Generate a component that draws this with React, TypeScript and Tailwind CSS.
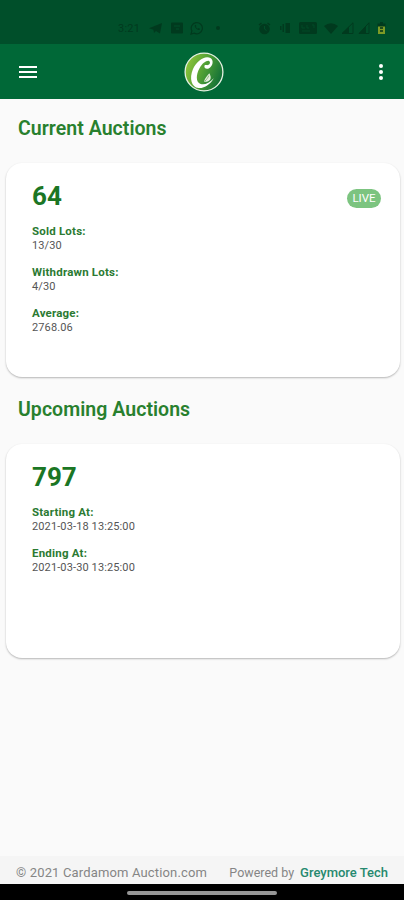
type Field = { label: string; value: string };

type Auction = { id: string; live?: boolean; fields: Field[] };

const current: Auction = {
  id: "64",
  live: true,
  fields: [
    { label: "Sold Lots:", value: "13/30" },
    { label: "Withdrawn Lots:", value: "4/30" },
    { label: "Average:", value: "2768.06" },
  ],
};

const upcoming: Auction = {
  id: "797",
  fields: [
    { label: "Starting At:", value: "2021-03-18 13:25:00" },
    { label: "Ending At:", value: "2021-03-30 13:25:00" },
  ],
};

function StatusBar() {
  return (
    <div className="flex h-11 shrink-0 items-center justify-between bg-[#004f2a] pt-3 pr-[18px] pl-[118px] text-[#003a1e]">
      <div className="flex items-center">
        <span className="w-[31px] text-[11px] leading-none tracking-[0.2px]">3:21</span>
        <svg className="h-[12px] w-[14px]" viewBox="0 0 14 12" fill="currentColor">
          <path d="M0 6.3 13 1l-2 10.5-4-2.6-2 2-.6-3.2z" />
        </svg>
        <svg className="ml-2 h-[12px] w-[12px]" viewBox="0 0 12 12">
          <rect width="12" height="11" y=".5" rx="1" fill="currentColor" />
          <path d="M3 4h6M5 7h3" stroke="#004f2a" />
        </svg>
        <svg className="ml-[7px] h-[14px] w-[14px]" viewBox="0 0 14 14" fill="none" stroke="currentColor" strokeWidth="1.2">
          <path d="m1 13 .9-3.1a5.6 5.6 0 1 1 2.2 2.2z" />
          <path d="M4.8 4.2c-.8 1.8 2.7 5.4 4.8 4.8l.4-1.2-1.6-.7-.8.7-1.8-1.9.6-.7-.7-1.4z" fill="currentColor" stroke="none" />
        </svg>
        <span className="ml-3 size-1 rounded-full bg-current" />
      </div>
      <div className="flex items-center">
        <svg className="h-[13px] w-[13px]" viewBox="0 0 13 13">
          <circle cx="6.5" cy="7" r="5.3" fill="currentColor" />
          <path d="m1 3 2.5-2M12 3 9.500 1" stroke="currentColor" strokeWidth="1.4" />
          <path d="M6.500 4v3l2 1.500" fill="none" stroke="#004f2a" />
        </svg>
        <svg className="ml-[9px] h-[12px] w-[11px]" viewBox="0 0 11 12" fill="currentColor">
          <path d="M0 4h1.500v4H0zM2.500 2H4v8H2.500zM5.500 1H10v10H5.500z" />
        </svg>
        <svg className="ml-2 h-[12px] w-[18px]" viewBox="0 0 18 12">
          <rect width="18" height="12" rx="1.500" fill="currentColor" />
          <path d="M3 3v3h3M8 3v3h2M13 3h2v3M3 9h8" fill="none" stroke="#004f2a" strokeWidth=".8" />
        </svg>
        <svg className="ml-[7px] h-[11px] w-[14px]" viewBox="0 0 14 11" fill="currentColor">
          <path d="M7 11 0 3q7-5.500 14 0z" />
        </svg>
        <svg className="ml-[3px] h-[12px] w-[13px]" viewBox="0 0 13 12">
          <path d="M12 .8v10.700H1z" fill="none" stroke="currentColor" />
          <path d="M8 4.500v7H1z" fill="currentColor" />
        </svg>
        <svg className="ml-[4px] h-[12px] w-[12px]" viewBox="0 0 12 12">
          <path d="M11 .8v10.700H1z" fill="none" stroke="currentColor" />
          <path d="M8 4v7.500H1z" fill="currentColor" />
        </svg>
        <svg className="ml-[7px] h-[13px] w-[9px]" viewBox="0 0 9 13">
          <path d="M3 0h3v1.500h2.500V5h-8V1.500H3z" fill="currentColor" />
          <path d="M1 4.500h7v7.500H1z" fill="#7d9a26" />
          <path d="M3 6h3M3 9h3" stroke="#003319" strokeWidth="1.500" />
        </svg>
      </div>
    </div>
  );
}

function Logo() {
  return (
    <svg className="size-10" viewBox="0 0 40 40">
      <defs>
        <linearGradient id="leaf" x1="0" y1=".3" x2="1" y2=".7">
          <stop offset="0" stopColor="#8fc53a" />
          <stop offset=".5" stopColor="#4c9c35" />
          <stop offset="1" stopColor="#0b6b38" />
        </linearGradient>
      </defs>
      <circle cx="20" cy="20" r="18.900" fill="url(#leaf)" stroke="#e5f1e3" strokeWidth="1.300" />
      <path
        d="M20.500 13.500c-.8 2.700 2 4.200 4.600 2.700 3.800-2.200 4.800-7.700 1.700-9.900C21.500 2.700 12.700 8.500 8.900 17.200 5 26.500 7.500 35.300 14.500 36c5.800.5 12-3.800 15.300-9.800-4.200 4.600-9.400 7-13.200 5.700-5-1.800-4.600-9.400-1.200-15.500 2.900-5.300 7.500-8.300 9.600-7.400 1.800.8.9 3.800-1.300 4.100-1.300.2-1.900-.6-3.200.4z"
        fill="#fff"
      />
      <path d="M20 29.500c.8-3.600 3-5.300 5.300-8.300 1.300 2.400 2.100 4.500.8 6.500-1.200 1.600-3.800 2.500-6.100 1.800z" fill="#e4edde" />
      <path d="M21 29c1.800-1.800 3-3.300 3.800-5.400" stroke="#76a865" fill="none" strokeWidth=".8" />
    </svg>
  );
}

function AppBar() {
  return (
    <header className="flex h-[55px] shrink-0 items-center justify-between bg-[#006837] pr-[18px] pl-[19px] text-white">
      <button aria-label="Menu" className="flex w-[18px] flex-col gap-[3px]">
        <span className="h-[2px] bg-current" />
        <span className="h-[2px] bg-current" />
        <span className="h-[2px] bg-current" />
      </button>
      <div className="-ml-[6px]">
        <Logo />
      </div>
      <button aria-label="More" className="flex w-[10px] flex-col items-center gap-[2px]">
        <span className="size-1 rounded-full bg-current" />
        <span className="size-1 rounded-full bg-current" />
        <span className="size-1 rounded-full bg-current" />
      </button>
    </header>
  );
}

function AuctionCard({ auction }: { auction: Auction }) {
  return (
    <article className="mr-1 ml-[6px] flex h-[214px] items-start justify-between rounded-2xl bg-white pt-[17px] pr-[19px] pl-[26px] shadow-[0_1px_2px_rgba(0,0,0,0.28)]">
      <div>
        <h3 className="text-[26px] leading-8 font-bold text-[#1b7624]">{auction.id}</h3>
        <dl className="mt-[12px] flex flex-col gap-[13px] text-[11px] leading-[14px]">
          {auction.fields.map((f) => (
            <div key={f.label}>
              <dt className="text-[11.5px] font-bold tracking-[0.2px] text-[#2b7a32]">{f.label}</dt>
              <dd className="pt-px -mb-px tracking-[0.12px] text-[#555]">{f.value}</dd>
            </div>
          ))}
        </dl>
      </div>
      {auction.live && (
        <span className="mt-[9px] flex h-[19px] w-[34px] items-center justify-center rounded-full bg-[#7cc480] pt-px text-[11.5px] text-white">
          LIVE
        </span>
      )}
    </article>
  );
}

function Section({ title, auction }: { title: string; auction: Auction }) {
  return (
    <section className="h-[281px]">
      <h2 className="flex h-16 items-center pb-[4px] pl-[18px] text-[19.5px] font-semibold tracking-[0.05px] text-[#28802e]">{title}</h2>
      <AuctionCard auction={auction} />
    </section>
  );
}

export default function App() {
  return (
    <div className="flex h-[900px] w-[404px] flex-col overflow-hidden bg-[#fafafa] font-['Roboto',sans-serif]">
      <StatusBar />
      <AppBar />
      <main className="flex-1">
        <Section title="Current Auctions" auction={current} />
        <Section title="Upcoming Auctions" auction={upcoming} />
      </main>
      <footer className="flex h-[28px] shrink-0 items-center justify-between bg-[#f5f5f5] pt-[5px] pr-4 pl-4 text-[#858585]">
        <span className="text-[13px] tracking-[0.15px]">© 2021 Cardamom Auction.com</span>
        <span className="flex items-baseline gap-[6px] text-[12.5px]">
          Powered by
          <a className="text-[13px] font-medium text-[#26896f]">Greymore Tech</a>
        </span>
      </footer>
      <div className="flex h-4 shrink-0 justify-center bg-black pt-[7px]">
        <span className="h-1 w-[150px] rounded-full bg-[#969696]" />
      </div>
    </div>
  );
}
